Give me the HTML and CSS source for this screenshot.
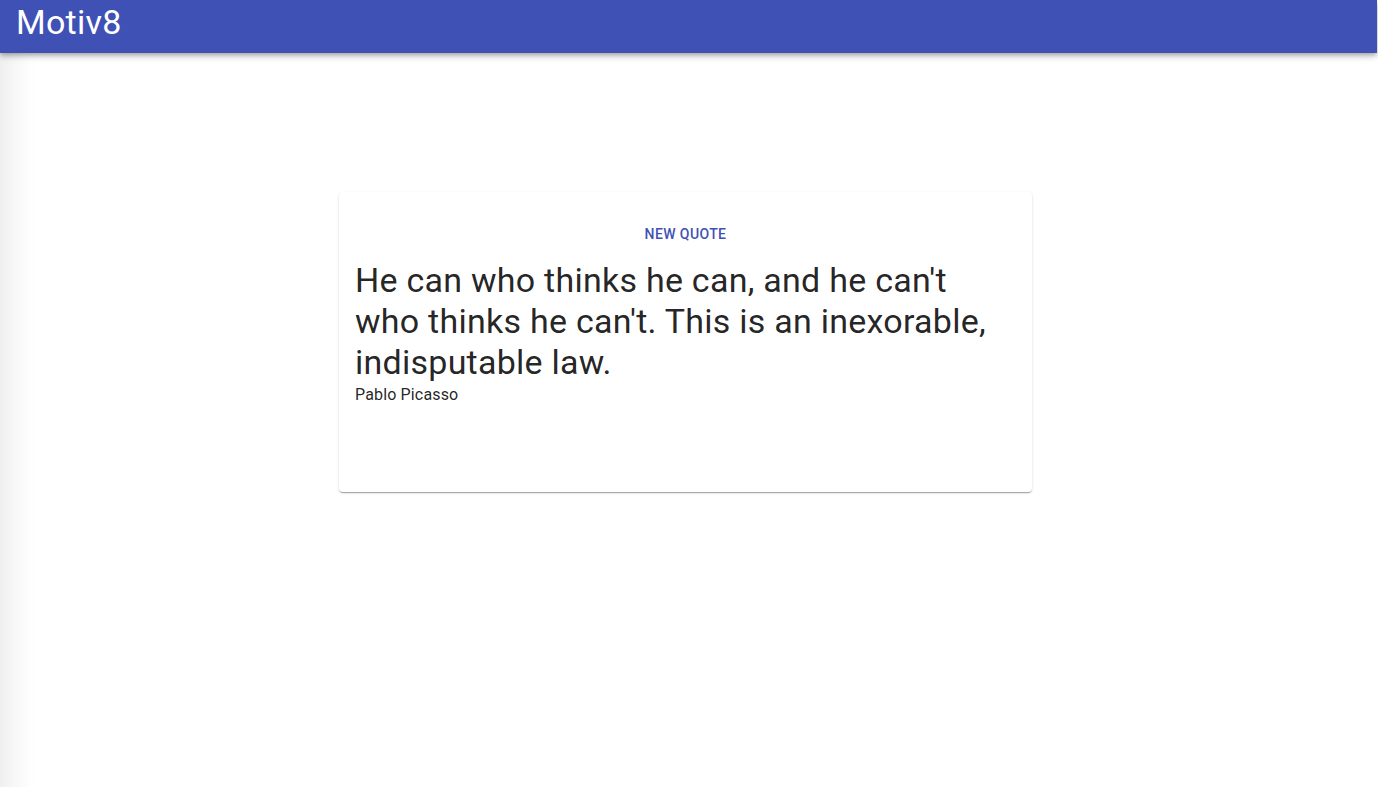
FILE: index.html
```html
<!DOCTYPE html>
<html lang="en">
<head>
<meta charset="utf-8">
<title>Motiv8</title>
<link rel="stylesheet" href="styles.css">
</head>
<body>
<header class="app-bar">
  <h1 class="app-title">Motiv8</h1>
</header>
<main class="page">
  <section class="card">
    <div class="card-actions">
      <button class="btn-text" type="button">New Quote</button>
    </div>
    <p class="quote">He can who thinks he can, and he can't who thinks he can't. This is an inexorable, indisputable law.</p>
    <p class="author">Pablo Picasso</p>
  </section>
</main>
</body>
</html>
```

FILE: styles.css
```css
* { box-sizing: border-box; }
html, body { height: 100%; }
body {
  margin: 0;
  font-family: Roboto, "Liberation Sans", Arial, sans-serif;
  color: rgba(0,0,0,0.87);
  background: linear-gradient(to right, #efefef 0, #f7f7f7 14px, #fdfdfd 28px, #ffffff 36px);
  overflow: hidden;
}
.app-bar {
  height: 53px;
  width: 1377px;
  background: #3f51b5;
  color: #fff;
  display: flex;
  align-items: center;
  padding-left: 16px;
  box-shadow: 0 2px 4px -1px rgba(0,0,0,0.2), 0 4px 5px 0 rgba(0,0,0,0.14), 0 1px 10px 0 rgba(0,0,0,0.12);
  position: relative;
  z-index: 1;
}
.app-title {
  margin: 0;
  font-size: 34px;
  font-weight: 400;
  line-height: 1;
  letter-spacing: 0.25px;
  position: relative;
  top: -5px;
}
.page {
  padding: 139px 0 0 339px;
}
.card {
  width: 693px;
  height: 300px;
  background: #fff;
  border-radius: 4px;
  padding: 16px;
  box-shadow: 0 2px 1px -1px rgba(0,0,0,0.2), 0 1px 1px 0 rgba(0,0,0,0.14), 0 1px 3px 0 rgba(0,0,0,0.12);
}
.card-actions {
  display: flex;
  justify-content: center;
  padding-top: 8px;
}
.btn-text {
  background: none;
  border: 0;
  height: 36px;
  padding: 6px 8px;
  font-family: inherit;
  font-size: 14px;
  font-weight: 500;
  letter-spacing: 0.4px;
  text-transform: uppercase;
  color: #3f51b5;
  cursor: pointer;
}
.quote {
  margin: 8px 0 0;
  font-size: 34px;
  line-height: 41px;
  font-weight: 400;
  letter-spacing: 0.25px;
  color: rgba(0,0,0,0.87);
}
.author {
  margin: 0;
  font-size: 16px;
  line-height: 1.5;
  letter-spacing: 0.15px;
  color: rgba(0,0,0,0.87);
}
```
